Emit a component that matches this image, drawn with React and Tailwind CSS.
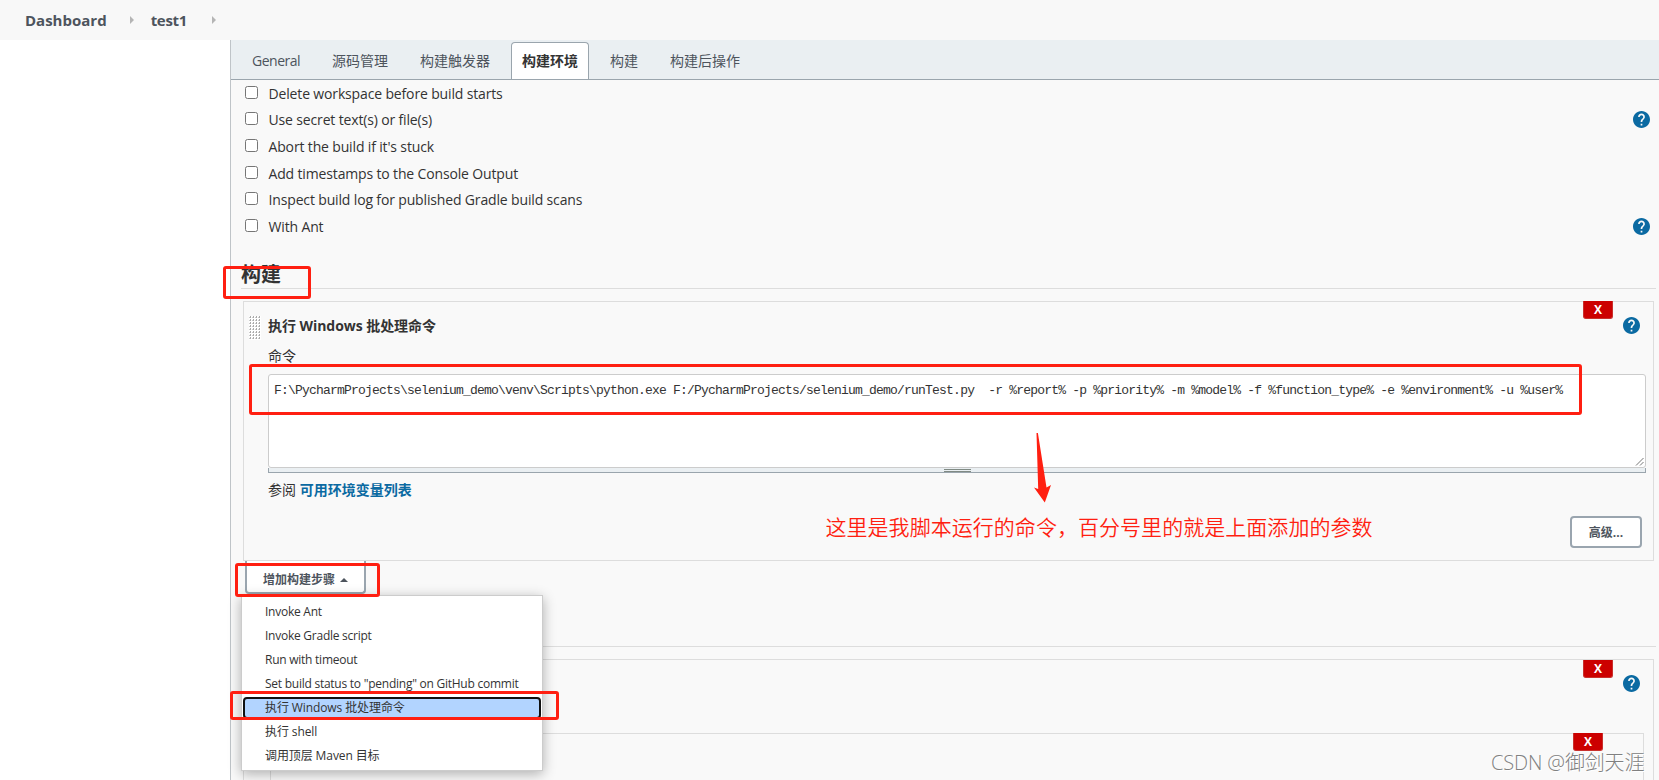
import React from 'react'
import clsx from 'clsx'

const TABS = ['General', '源码管理', '构建触发器', '构建环境', '构建', '构建后操作']

const OPTIONS = [
  { label: 'Delete workspace before build starts' },
  { label: 'Use secret text(s) or file(s)', help: true },
  { label: "Abort the build if it's stuck" },
  { label: 'Add timestamps to the Console Output' },
  { label: 'Inspect build log for published Gradle build scans' },
  { label: 'With Ant', help: true },
]

const STEPS = [
  'Invoke Ant',
  'Invoke Gradle script',
  'Run with timeout',
  'Set build status to "pending" on GitHub commit',
  '执行 Windows 批处理命令',
  '执行 shell',
  '调用顶层 Maven 目标',
]

const COMMAND =
  'F:\\PycharmProjects\\selenium_demo\\venv\\Scripts\\python.exe F:/PycharmProjects/selenium_demo/runTest.py  -r %report% -p %priority% -m %model% -f %function_type% -e %environment% -u %user%'

function HelpIcon({ className }) {
  return (
    <svg viewBox="2 2 20 20" className={clsx('size-[17px] shrink-0', className)}>
      <path
        fill="#0b6aa2"
        d="M12 2C6.48 2 2 6.48 2 12s4.48 10 10 10 10-4.48 10-10S17.52 2 12 2zm1 17h-2v-2h2v2zm2.07-7.75l-.9.92C13.45 12.9 13 13.5 13 15h-2v-.5c0-1.1.45-2.1 1.17-2.83l1.24-1.26c.37-.36.59-.86.59-1.41 0-1.1-.9-2-2-2s-2 .9-2 2H8c0-2.21 1.79-4 4-4s4 1.79 4 4c0 .88-.36 1.68-.93 2.25z"
      />
    </svg>
  )
}

function Separator({ className }) {
  return (
    <svg viewBox="0 0 4 8" className={clsx('h-2 w-1', className)}>
      <path d="M0 0l4 4-4 4z" fill="#b5b5b5" />
    </svg>
  )
}

function DeleteButton({ className }) {
  return (
    <button
      className={clsx(
        'absolute flex h-[18px] w-[30px] items-center justify-center rounded-b-[3px] border border-t-0 border-[#c9302c] bg-[#cc0000] pt-px text-[12px] font-bold text-white',
        className
      )}
    >
      X
    </button>
  )
}

// Red marker frame drawn over the form
function Frame({ className }) {
  return <div className={clsx('pointer-events-none absolute z-20 rounded-[3px] border-3 border-[#ff1f11]', className)} />
}

function DragHandle() {
  return (
    <svg className="mt-[14px] ml-[5px] h-[24px] w-[12px] shrink-0">
      <defs>
        <pattern id="dots" width="3" height="3" patternUnits="userSpaceOnUse">
          <rect width="3" height="3" fill="#fff" />
          <rect y="1" width="2" height="1" fill="#ccc" />
          <rect x="1" width="1" height="2" fill="#aaa" />
        </pattern>
      </defs>
      <rect width="12" height="24" fill="url(#dots)" />
    </svg>
  )
}

function StepMenu() {
  return (
    <div className="absolute top-[34px] left-[-4px] z-10 h-[176px] w-[302px] border border-[#ccc] bg-white pt-1 text-[12px] text-[#333] shadow-[0_3px_12px_rgba(0,0,0,0.3)]">
      {STEPS.map((step, i) => (
        <div key={step} className="flex h-6 items-center px-px">
          <div
            className={clsx(
              'flex h-[22px] w-full items-center rounded-[4px] border-2 pl-5 whitespace-nowrap',
              i === 4 ? 'border-[#101010] bg-[#b2d4ff]' : 'border-transparent',
              i < 4 ? 'tracking-[-0.25px]' : 'tracking-[-0.1px]'
            )}
          >
            {step}
          </div>
        </div>
      ))}
    </div>
  )
}

export default function App() {
  return (
    <div className="relative flex h-[780px] w-[1659px] flex-col overflow-hidden bg-white font-['Open_Sans','Noto_Sans_CJK_SC',sans-serif] text-[14px] text-[#333]">
      <header className="flex h-10 shrink-0 items-center bg-[#f8f8f8] pl-[25px] text-[15px] font-bold text-[#4d545d]">
        <span>Dashboard</span>
        <Separator className="ml-[23px]" />
        <span className="ml-[17px] tracking-[-0.3px]">test1</span>
        <Separator className="ml-[25px]" />
      </header>

      <div className="flex min-h-0 flex-1">
        <aside className="w-[230px] shrink-0" />
        <main className="flex-1 border-l border-[#bfc4c8] bg-[#f9f9f9]">
          <nav className="flex h-10 items-end gap-[10px] border-b border-[#9aa5ad] bg-[#eaeff2] pl-[10px] text-[#4d545d]">
            {TABS.map((tab, i) => (
              <div
                key={tab}
                className={clsx(
                  'flex h-[37px] items-center rounded-t-[4px] border border-b-0 px-[10px] pb-[2px]',
                  i === 0 && 'tracking-[-0.5px]',
                  i === 3 ? 'border-[#9aa5ad] bg-white font-bold text-[#333]' : 'border-transparent'
                )}
              >
                {tab}
              </div>
            ))}
          </nav>

          <div>
            {OPTIONS.map((option) => (
              <label
                key={option.label}
                className="flex h-[26.6px] items-center pr-[9px] pl-[14px] font-medium tracking-[-0.15px]"
              >
                <span className="relative -top-px size-[13px] rounded-[2.5px] border border-[#767676] bg-white" />
                <span className="ml-[10.5px]">{option.label}</span>
                {option.help && <HelpIcon className="ml-auto" />}
              </label>
            ))}
          </div>

          <h2 className="mr-[3px] ml-[10px] flex h-[49px] items-center border-b border-[#ddd] pt-[22px] text-[20px] leading-none font-bold">
            构建
          </h2>

          <section className="relative mt-3 mr-[5px] ml-3 flex h-[260px] border border-[#ddd]">
            <DragHandle />
            <DeleteButton className="-top-px right-[40px]" />
            <HelpIcon className="absolute top-[15px] right-[13px]" />
            <div className="ml-[7px] flex flex-1 flex-col pr-[7px]">
              <div className="mt-[13px] h-[21px] leading-[21px] font-bold tracking-[-0.05px]">
                执行 Windows 批处理命令
              </div>
              <div className="mt-[9px] h-[21px] leading-[21px]">命令</div>
              <div className="relative mt-[8px] h-[94px] rounded-[3px] border border-[#ccc] bg-white pt-[6px] pl-[5px] font-['Liberation_Mono',monospace] text-[13px] leading-5 tracking-[-0.8px] whitespace-pre">
                {COMMAND}
                <svg className="absolute right-px bottom-px size-[9px]" viewBox="0 0 9 9" stroke="#777" fill="none">
                  <path d="M1 8.5L8.5 1M5 8.5L8.5 5" />
                </svg>
              </div>
              <div className="flex h-[5px] flex-col items-center gap-px border border-t-0 border-[#9aa5ad] bg-[#eaeff2] pt-px">
                <div className="h-px w-[27px] shrink-0 bg-[#808a84]" />
                <div className="h-px w-[27px] shrink-0 bg-[#808a84]" />
              </div>
              <div className="mt-[6px] h-[21px] leading-[21px]">
                参阅 <a className="font-bold text-[#0b6aa2]">可用环境变量列表</a>
              </div>
              <button className="mt-[16px] mr-[4px] flex h-8 w-[72px] items-center justify-center self-end rounded-[4px] border-2 border-[#9aa5af] bg-white pt-[2px] text-[12px] font-bold text-[#4d545d]">
                高级...
              </button>
            </div>
          </section>

          <div className="mr-[3px] ml-[10px] h-[86px] border-b border-[#ddd] pl-[4px]">
            <div className="relative w-[121px]">
              <button className="flex h-[33px] w-full items-center justify-center gap-[5px] rounded-b-[4px] border-2 border-t-0 border-[#9aa5af] bg-white pt-[7px] text-[12px] font-bold text-[#4d545d]">
                增加构建步骤
                <svg viewBox="0 0 8 4" className="h-1 w-2">
                  <path d="M0 4l4-4 4 4z" fill="#4d545d" />
                </svg>
              </button>
              <StepMenu />
            </div>
          </div>

          <section className="relative mt-3 mr-[5px] ml-3 h-[200px] border border-[#ddd]">
            <DeleteButton className="top-0 right-[40px]" />
            <HelpIcon className="absolute top-[15px] right-[13px]" />
            <div className="relative mt-[73px] mr-[9px] ml-[26px] h-[120px] border border-[#ddd]">
              <DeleteButton className="-top-px right-[40px]" />
            </div>
          </section>
        </main>
      </div>

      <Frame className="top-[266px] left-[223px] h-[33px] w-[88px]" />
      <Frame className="top-[364px] left-[249px] h-[51px] w-[1333px]" />
      <Frame className="top-[563px] left-[235px] h-[34px] w-[145px]" />
      <Frame className="top-[691px] left-[230px] h-[29px] w-[329px]" />

      <svg className="absolute top-[433px] left-[1034px] h-[70px] w-[18px]" viewBox="0 0 18 70">
        <path d="M2.5 0h1.4l8.6 54.5 4.5-2.5L10.8 69.5 0 54.5l4.2 1.5z" fill="#ff1f11" />
      </svg>
      <div className="absolute top-[512px] left-[825.5px] text-[21px] leading-[30px] font-[350] tracking-[0.04px] whitespace-nowrap text-[#ff1f11]">
        这里是我脚本运行的命令，百分号里的就是上面添加的参数
      </div>
      <div className="absolute top-[748.5px] left-[1491px] text-[20px] leading-[28px] font-light tracking-[-0.15px] whitespace-nowrap text-[#808080] [text-shadow:1px_1px_0_#fff]">
        CSDN @御剑天涯
      </div>
    </div>
  )
}
